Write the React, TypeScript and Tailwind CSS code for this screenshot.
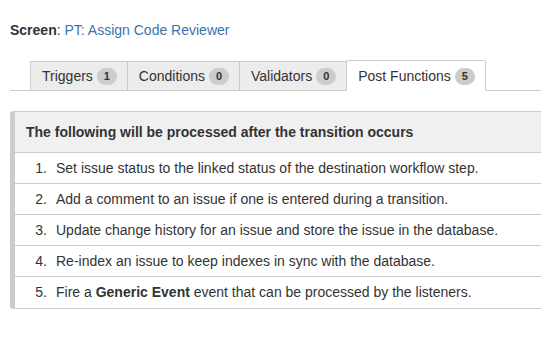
import React from "react";

const tabs = [
  { label: "Triggers", count: 1 },
  { label: "Conditions", count: 0 },
  { label: "Validators", count: 0 },
  { label: "Post Functions", count: 5, active: true },
];

const items: React.ReactNode[] = [
  "Set issue status to the linked status of the destination workflow step.",
  "Add a comment to an issue if one is entered during a transition.",
  "Update change history for an issue and store the issue in the database.",
  "Re-index an issue to keep indexes in sync with the database.",
  <>
    Fire a <b>Generic Event</b> event that can be processed by the listeners.
  </>,
];

export default function App() {
  return (
    <div className="w-[541px] h-[340px] overflow-hidden bg-white text-[14px] text-[#333] font-['Liberation_Sans',Arial,sans-serif]">
      {/* screen name */}
      <div className="pl-[10px] pt-[20px] leading-[20px]">
        <b>Screen</b>: <span className="text-[#3b73af]">PT: Assign Code Reviewer</span>
      </div>

      {/* tabs */}
      <div className="ml-[10px] mt-[21px] flex items-end pl-[20px] border-b border-[#ccc] h-[30px]">
        {tabs.map((t) => (
          <div
            key={t.label}
            className={`flex items-center gap-[4px] pl-[11px] pr-[10px] border border-[#ccc] -mb-px -ml-px first:ml-0 ${
              t.active ? "h-[31px] pt-[2px] bg-white border-b-white rounded-t-[2px]" : "h-[30px] bg-[#ececec]"
            }`}
          >
            <span>{t.label}</span>
            <span className="inline-flex items-center justify-center min-w-[20px] h-[17px] px-[6px] rounded-full bg-[#ccc] text-[11px] font-bold text-[#333]">
              {t.count}
            </span>
          </div>
        ))}
      </div>

      {/* post functions box */}
      <div className="ml-[10px] mt-[20px] w-[560px] border border-[#ccc] border-l-[5px] rounded-[3px]">
        <div className="h-[41px] flex items-center pl-[11px] bg-[#f0f0f0] border-b border-[#ccc] font-bold">
          The following will be processed after the transition occurs
        </div>
        {items.map((it, i) => (
          <div
            key={i}
            className="h-[31px] flex items-center border-b border-[#ccc] last:border-b-0"
          >
            <span className="w-[32px] text-right">{i + 1}.</span>
            <span className="pl-[9px]">{it}</span>
          </div>
        ))}
      </div>
    </div>
  );
}
